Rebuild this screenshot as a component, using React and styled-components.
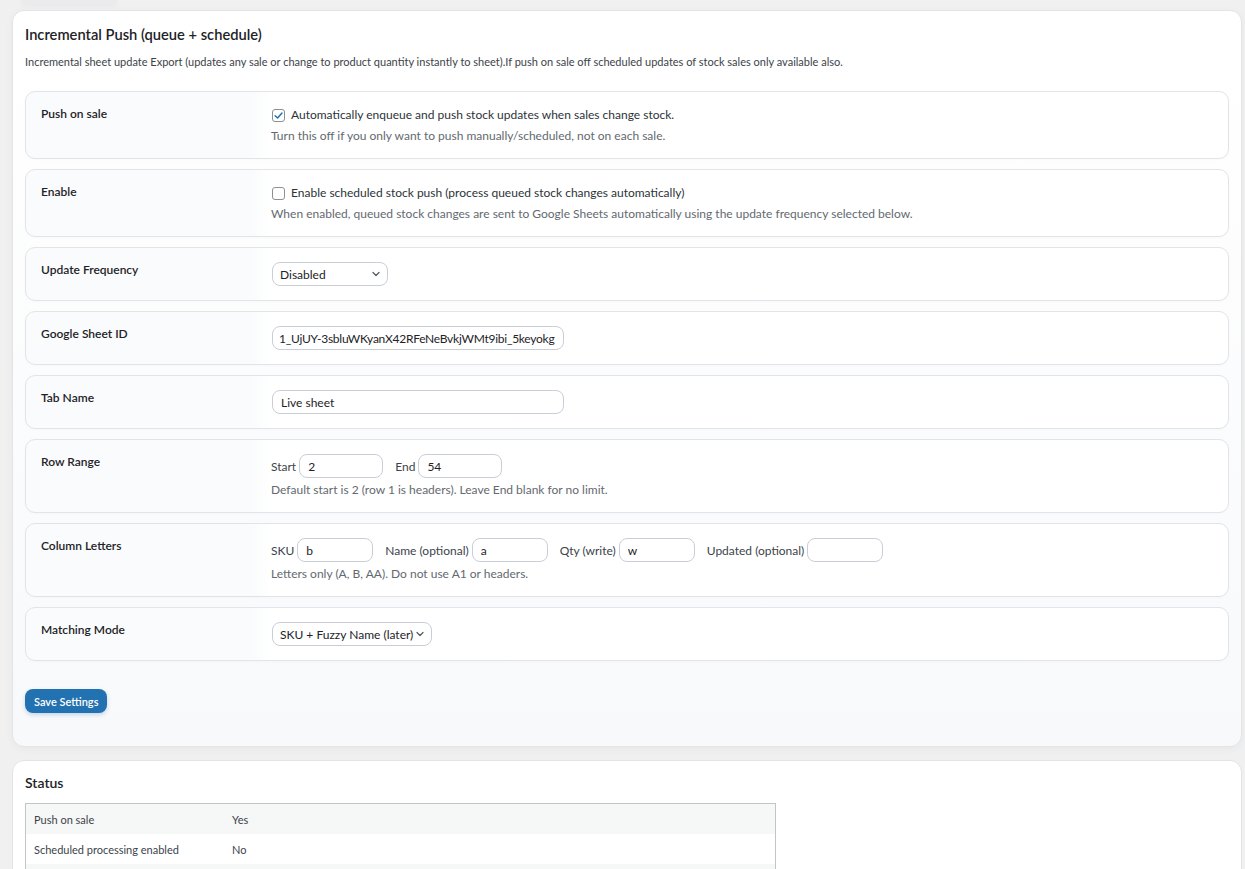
import React from "react";
import styled, { createGlobalStyle } from "styled-components";

const GlobalStyle = createGlobalStyle`
  html, body {
    margin: 0;
    padding: 0;
    background: #f0f0f1;
    font-family: "Segoe UI", Lato, "Noto Sans", sans-serif;
    color: #1d2327;
  }
`;

function Check({ checked }) {
  return (
    <CheckBox $checked={checked}>
      {checked && (
        <svg width="11" height="11" viewBox="0 0 12 12">
          <path d="M2.3 6.2 L5 8.8 L9.8 3.2" fill="none" stroke="#2271b1" strokeWidth="1.6" strokeLinecap="round" strokeLinejoin="round" />
        </svg>
      )}
    </CheckBox>
  );
}

function Select({ value, width }) {
  return (
    <SelectBox $width={width}>
      <span>{value}</span>
      <svg width="10" height="10" viewBox="0 0 10 10">
        <path d="M2 3.5 L5 6.5 L8 3.5" fill="none" stroke="#50575e" strokeWidth="1.2" strokeLinecap="round" strokeLinejoin="round" />
      </svg>
    </SelectBox>
  );
}

function App() {
  return (
    <Page>
      <GlobalStyle />
      <TopStub />
      <Card>
        <Title>Incremental Push (queue + schedule)</Title>
        <Intro>
          Incremental sheet update Export (updates any sale or change to product quantity instantly to sheet).If push on sale off scheduled updates of stock sales only available also.
        </Intro>
        <Rows>
          <Row>
            <Label>Push on sale</Label>
            <Field>
              <CheckLine>
                <Check checked />
                Automatically enqueue and push stock updates when sales change stock.
              </CheckLine>
              <Help>Turn this off if you only want to push manually/scheduled, not on each sale.</Help>
            </Field>
          </Row>
          <Row>
            <Label>Enable</Label>
            <Field>
              <CheckLine>
                <Check />
                Enable scheduled stock push (process queued stock changes automatically)
              </CheckLine>
              <Help>When enabled, queued stock changes are sent to Google Sheets automatically using the update frequency selected below.</Help>
            </Field>
          </Row>
          <Row>
            <Label>Update Frequency</Label>
            <Field>
              <Select value="Disabled" width={116} />
            </Field>
          </Row>
          <Row>
            <Label>Google Sheet ID</Label>
            <Field>
              <Input $width={292} $tight readOnly value="1_UjUY-3sbluWKyanX42RFeNeBvkjWMt9ibi_5keyokg" />
            </Field>
          </Row>
          <Row>
            <Label>Tab Name</Label>
            <Field>
              <Input $width={292} readOnly value="Live sheet" />
            </Field>
          </Row>
          <Row>
            <Label>Row Range</Label>
            <Field>
              <Inline>
                <Pair>Start <Input $width={84} readOnly value="2" /></Pair>
                <Pair>End <Input $width={84} readOnly value="54" /></Pair>
              </Inline>
              <Help>Default start is 2 (row 1 is headers). Leave End blank for no limit.</Help>
            </Field>
          </Row>
          <Row>
            <Label>Column Letters</Label>
            <Field>
              <Inline>
                <Pair>SKU <Input $width={76} readOnly value="b" /></Pair>
                <Pair>Name (optional) <Input $width={76} readOnly value="a" /></Pair>
                <Pair>Qty (write) <Input $width={76} readOnly value="w" /></Pair>
                <Pair>Updated (optional) <Input $width={76} readOnly value="" /></Pair>
              </Inline>
              <Help>Letters only (A, B, AA). Do not use A1 or headers.</Help>
            </Field>
          </Row>
          <Row>
            <Label>Matching Mode</Label>
            <Field>
              <Select value="SKU + Fuzzy Name (later)" width={160} />
            </Field>
          </Row>
        </Rows>
        <SaveButton>Save Settings</SaveButton>
      </Card>
      <StatusCard>
        <StatusTitle>Status</StatusTitle>
        <StatusTable>
          <tbody>
            <StatusRow $alt>
              <StatusKey>Push on sale</StatusKey>
              <StatusVal>Yes</StatusVal>
            </StatusRow>
            <StatusRow>
              <StatusKey>Scheduled processing enabled</StatusKey>
              <StatusVal>No</StatusVal>
            </StatusRow>
            <StatusRow $alt>
              <StatusKey />
              <StatusVal />
            </StatusRow>
          </tbody>
        </StatusTable>
      </StatusCard>
    </Page>
  );
}

export default App;

const Page = styled.div`
  padding: 0 3px 0 12px;
  height: 869px;
  overflow: hidden;
  box-sizing: border-box;
`;

const TopStub = styled.div`
  width: 96px;
  height: 3px;
  margin-left: 9px;
  border-radius: 0 0 10px 10px;
  background: #ebebed;
  box-shadow: 0 2px 5px rgba(0, 0, 0, 0.06);
`;

const Card = styled.div`
  margin-top: 7px;
  background: linear-gradient(180deg, #ffffff 0%, #f8f9fb 100%);
  border: 1px solid #e2e4e8;
  border-radius: 12px;
  box-shadow: 0 2px 8px rgba(0, 0, 0, 0.04);
  padding: 14px 12px 33px 12px;
`;

const Title = styled.h2`
  margin: 0;
  font-size: 14.7px;
  font-weight: 600;
  line-height: 18px;
  color: #1d2327;
`;

const Intro = styled.p`
  margin: 11px 0 0;
  font-size: 11px;
  line-height: 16px;
  color: #3c434a;
`;

const Rows = styled.div`
  margin-top: 21px;
  display: flex;
  flex-direction: column;
  gap: 10px;
`;

const Row = styled.div`
  display: flex;
  border: 1px solid #e1e4e8;
  border-radius: 10px;
  background: linear-gradient(90deg, #fafbfc 0px, #fafbfc 225px, #ffffff 245px, #ffffff 100%);
  box-shadow: 0 1px 2px rgba(0, 0, 0, 0.02);
`;

const Label = styled.div`
  width: 230px;
  flex: none;
  box-sizing: border-box;
  padding: 14px 10px 0 15px;
  font-size: 12px;
  line-height: 16px;
  font-weight: 600;
  color: #1d2327;
`;

const Field = styled.div`
  flex: 1;
  padding: 14px 10px 14px 15px;
  font-size: 12px;
  color: #2c3338;
`;

const CheckLine = styled.label`
  display: flex;
  align-items: center;
  gap: 6px;
  line-height: 18px;
  height: 18px;
`;

const CheckBox = styled.span`
  width: 13px;
  height: 13px;
  box-sizing: border-box;
  border: 1px solid #8c8f94;
  border-radius: 3px;
  background: #fff;
  display: inline-flex;
  align-items: center;
  justify-content: center;
  margin-left: 1px;
`;

const Help = styled.div`
  margin-top: 4px;
  font-size: 12px;
  line-height: 16px;
  color: #646970;
`;

const Inline = styled.div`
  display: flex;
  align-items: center;
  gap: 12px;
`;

const Pair = styled.label`
  display: flex;
  align-items: center;
  gap: 2px;
  font-size: 12px;
  color: #3c434a;
`;

const Input = styled.input`
  width: ${(p) => p.$width}px;
  height: 24px;
  box-sizing: border-box;
  border: 1px solid #c9ced6;
  border-radius: 8px;
  background: #fff;
  padding: 0 ${(p) => (p.$tight ? 6 : 8)}px;
  font-family: inherit;
  font-size: 12px;
  letter-spacing: ${(p) => (p.$tight ? "-0.25px" : "normal")};
  color: #1d2327;
  outline: none;
  margin-left: 1px;
`;

const SelectBox = styled.div`
  width: ${(p) => p.$width}px;
  height: 24px;
  box-sizing: border-box;
  border: 1px solid #c9ced6;
  border-radius: 8px;
  background: #fff;
  padding: 0 6px 0 7px;
  display: flex;
  align-items: center;
  justify-content: space-between;
  font-size: 12px;
  color: #1d2327;
  margin-left: 1px;
`;

const SaveButton = styled.button`
  margin-top: 28px;
  height: 24px;
  padding: 0 9px;
  border: none;
  border-radius: 8px;
  background: #2271b1;
  color: #fff;
  font-family: inherit;
  font-size: 11px;
  font-weight: 600;
  box-shadow: 0 2px 4px rgba(34, 113, 177, 0.25);
  cursor: pointer;
`;

const StatusCard = styled.div`
  margin-top: 13px;
  background: #fff;
  border: 1px solid #e2e4e8;
  border-radius: 12px;
  padding: 13px 12px 20px 12px;
`;

const StatusTitle = styled.h3`
  margin: 0;
  font-size: 14px;
  font-weight: 600;
  line-height: 18px;
  color: #1d2327;
`;

const StatusTable = styled.table`
  margin-top: 11px;
  width: 751px;
  border-collapse: collapse;
  border: 1px solid #c3c4c7;
`;

const StatusRow = styled.tr`
  background: ${(p) => (p.$alt ? "#f6f7f7" : "#ffffff")};
`;

const StatusKey = styled.td`
  width: 190px;
  height: 30px;
  padding: 0 8px;
  font-size: 11px;
  color: #3c434a;
`;

const StatusVal = styled.td`
  padding: 0;
  font-size: 11px;
  color: #3c434a;
`;
